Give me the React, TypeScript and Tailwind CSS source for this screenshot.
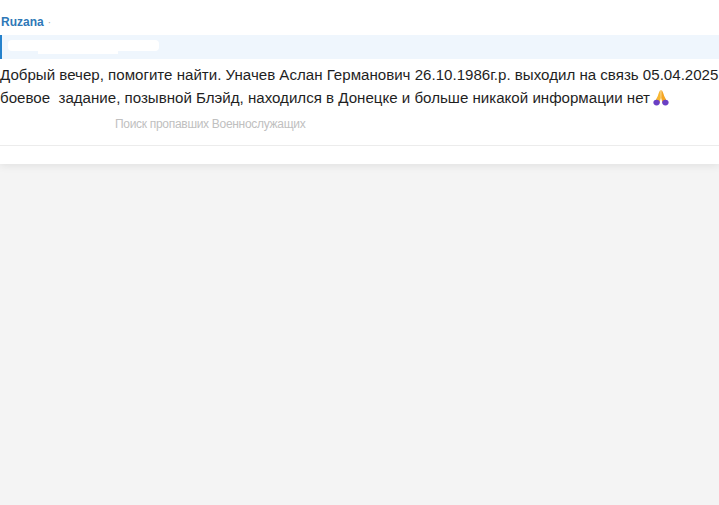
export default function App() {
  const font = { fontFamily: '"Liberation Sans", Arial, sans-serif' };
  return (
    <div className="min-h-[505px] w-full overflow-hidden bg-[#f4f4f4]" style={font}>
      <div className="flex h-[164px] flex-col bg-white shadow-[0_2px_8px_rgba(0,0,0,0.08)]">
        <div className="flex h-[35px] items-end pb-[6px] pl-px">
          <span className="text-[12px] leading-[14px] font-bold text-[#2f78b7]">Ruzana</span>
          <span className="ml-1 text-[10px] leading-[12px] text-[#aaaaaa]">·</span>
        </div>
        <div className="h-[24px] border-l-2 border-[#2481cc] bg-[#eff6fd] pl-[6px] pt-[5px]">
          <div className="h-[11px] w-[151px] rounded-sm bg-white"></div>
          <div className="ml-[30px] h-[3px] w-[80px] bg-white"></div>
        </div>
        <div className="whitespace-nowrap pt-[4px] text-[15.1px] leading-[23px] text-[#1f1f1f]">
          <div>Добрый вечер, помогите найти. Уначев Аслан Германович 26.10.1986г.р. выходил на связь 05.04.2025</div>
          <div className="flex items-center">
            <span className="whitespace-pre">боевое  задание, позывной Блэйд, находился в Донецке и больше никакой информации нет</span>
            <svg className="ml-[3px] mt-[-1px]" width="16" height="17" viewBox="0 0 16 17">
              <path d="M7.7 1 C6.4 1.5 5.6 4.5 4.8 7 L2.2 12 L6.5 14 L7.8 9 Z" fill="#f7b733" />
              <path d="M8.3 1 C9.6 1.5 10.4 4.5 11.2 7 L13.8 12 L9.5 14 L8.2 9 Z" fill="#f5a623" />
              <ellipse cx="3.6" cy="13.6" rx="3.2" ry="2.8" fill="#6a3fc4" />
              <ellipse cx="12.4" cy="13.6" rx="3.2" ry="2.8" fill="#6a3fc4" />
            </svg>
          </div>
        </div>
        <div className="flex h-[28px] items-center pl-[115px] pt-[1px] text-[12px] tracking-[-0.3px] text-[#c0c0c0]">
          Поиск пропавших Военнослужащих
        </div>
        <div className="mt-[8px] border-t border-[#ececec]"></div>
      </div>
    </div>
  );
}
